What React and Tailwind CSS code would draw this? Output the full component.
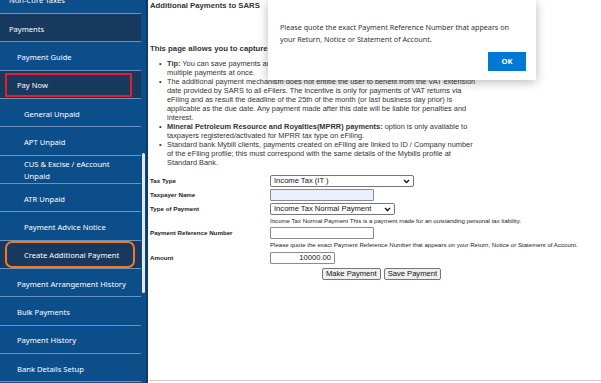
import React from "react";

const MENU = [
  { label: "Non-Core Taxes", indent: "pl-[9px]" },
  { label: "Payments", indent: "pl-[9px]", dark: true },
  { label: "Payment Guide", indent: "pl-[17px]" },
  { label: "Pay Now", indent: "pl-[17px]", dark: true, mark: "red" },
  { label: "General Unpaid", indent: "pl-[24px]" },
  { label: "APT Unpaid", indent: "pl-[24px]" },
  { label: "CUS & Excise / eAccount", label2: "Unpaid", indent: "pl-[24px]" },
  { label: "ATR Unpaid", indent: "pl-[24px]" },
  { label: "Payment Advice Notice", indent: "pl-[24px]" },
  { label: "Create Additional Payment", indent: "pl-[24px]", dark: true, mark: "orange" },
  { label: "Payment Arrangement History", indent: "pl-[17px]" },
  { label: "Bulk Payments", indent: "pl-[17px]" },
  { label: "Payment History", indent: "pl-[17px]" },
  { label: "Bank Details Setup", indent: "pl-[17px]" },
];

function Chevron() {
  return (
    <svg width="7" height="5" viewBox="0 0 7 5" className="shrink-0">
      <path d="M1 1 L3.5 3.5 L6 1" fill="none" stroke="#111" strokeWidth="1.3" />
    </svg>
  );
}

function Sidebar() {
  return (
    <div className="flex w-[141px] shrink-0 flex-col bg-[#0c4e8a] font-['Noto_Sans',sans-serif] text-[7.6px] text-white">
      <div className="-mt-[14.3px] flex flex-col">
        {MENU.map((m) => (
          <div
            key={m.label}
            className={`relative flex h-[28.33px] shrink-0 items-center border-b border-[#6b93bd] pt-[2px] ${m.indent} ${m.dark ? "bg-[#17385f]" : ""}`}
          >
            {m.mark === "red" && (
              <div className="absolute left-[5px] right-[9px] top-[2px] bottom-[1px] border-2 border-[#e3202a]" />
            )}
            {m.mark === "orange" && (
              <div className="absolute left-[5px] right-[6px] top-[0px] bottom-[0px] rounded-[7px] border-2 border-[#f27a22]" />
            )}
            <span className="relative whitespace-nowrap leading-[12px]">
              {m.label}
              {m.label2 && (
                <>
                  <br />
                  {m.label2}
                </>
              )}
            </span>
          </div>
        ))}
      </div>
    </div>
  );
}

function Field({ label, children, className = "" }) {
  return (
    <div className={`flex h-[12px] items-center ${className}`}>
      <div className="w-[120px] shrink-0 text-[6.2px] font-bold text-[#222]">{label}</div>
      {children}
    </div>
  );
}

export default function App() {
  return (
    <div className="flex h-[383px] w-[601px] overflow-hidden bg-white">
      <Sidebar />
      <div className="relative w-[5px] shrink-0 bg-[#0c4e8a]">
        <div className="absolute left-[1px] top-[153px] h-[140px] w-[3px] rounded-full bg-[#e6e6e6]" />
      </div>
      <div className="w-[2px] shrink-0 bg-[#0a3b6b]" />
      <main className="relative flex flex-1 flex-col pl-[2px] font-['Liberation_Sans',Arial,sans-serif] text-[#333]">
        <h1 className="mt-[1px] text-[7.75px] font-bold leading-[10px]">Additional Payments to SARS</h1>
        <p className="mt-[33px] text-[7.75px] font-bold leading-[10px]">
          This page allows you to capture additional payments to SARS.
        </p>
        <ul className="mt-[5px] pl-[17px] text-[7.4px] leading-[9px]">
          <li className="relative">
            <span className="absolute -left-[8px]">•</span>
            <b>Tip:</b> You can save payments and then use the Bulk Payments option to make
            <br />
            multiple payments at once.
          </li>
          <li className="relative">
            <span className="absolute -left-[8px]">•</span>
            The additional payment mechanism does not entitle the user to benefit from the VAT extension
            <br />
            date provided by SARS to all eFilers. The incentive is only for payments of VAT returns via
            <br />
            eFiling and as result the deadline of the 25th of the month (or last business day prior) is
            <br />
            applicable as the due date. Any payment made after this date will be liable for penalties and
            <br />
            interest.
          </li>
          <li className="relative">
            <span className="absolute -left-[8px]">•</span>
            <b>Mineral Petroleum Resource and Royalties(MPRR) payments:</b> option is only available to
            <br />
            taxpayers registered/activated for MPRR tax type on eFiling.
          </li>
          <li className="relative">
            <span className="absolute -left-[8px]">•</span>
            Standard bank Mybill clients, payments created on eFiling are linked to ID / Company number
            <br />
            of the eFiling profile; this must correspond with the same details of the Mybills profile at
            <br />
            Standard Bank.
          </li>
        </ul>

        <div className="mt-[8px] flex flex-col">
          <Field label="Tax Type">
            <div className="flex h-[12px] w-[144px] items-center justify-between rounded-[2px] border border-[#767676] px-[3px] text-[7.6px] text-[#111]">
              <span>Income Tax (IT )</span>
              <Chevron />
            </div>
          </Field>
          <Field label="Taxpayer Name" className="mt-[2px]">
            <div className="h-[12px] w-[104px] rounded-[1px] border border-[#8a8a8a] bg-[#e8f0fe]" />
          </Field>
          <Field label="Type of Payment" className="mt-[2px]">
            <div className="flex h-[12px] w-[125px] items-center justify-between rounded-[2px] border border-[#767676] px-[3px] text-[7.6px] text-[#111]">
              <span>Income Tax Normal Payment</span>
              <Chevron />
            </div>
          </Field>
          <div className="h-[11px] pl-[120px] pt-[1px] text-[6.1px] leading-[10px] text-[#222]">
            Income Tax Normal Payment This is a payment made for an outstanding personal tax liability.
          </div>
          <Field label="Payment Reference Number" className="mt-[1px]">
            <div className="h-[12px] w-[104px] rounded-[1px] border border-[#8a8a8a]" />
          </Field>
          <div className="h-[11px] pl-[120px] pt-[1px] text-[6.1px] leading-[10px] text-[#222]">
            Please quote the exact Payment Reference Number that appears on your Return, Notice or Statement of Account.
          </div>
          <Field label="Amount" className="mt-[2px]">
            <div className="flex h-[12px] w-[65px] items-center justify-end rounded-[1px] border border-[#8a8a8a] px-[3px] text-[7.6px] text-[#111]">
              10000.00
            </div>
          </Field>
          <div className="mt-[4px] flex gap-[3px] pl-[172px]">
            <button className="h-[12px] rounded-[2px] border border-[#767676] bg-[#efefef] px-[3px] text-[7.6px] leading-[10px] text-[#111]">
              Make Payment
            </button>
            <button className="h-[12px] rounded-[2px] border border-[#767676] bg-[#efefef] px-[3px] text-[7.6px] leading-[10px] text-[#111]">
              Save Payment
            </button>
          </div>
        </div>

        <div className="mt-auto mb-[2px] h-[1px] bg-[#c8c8c8]" />

        <div className="absolute left-[120px] top-0 flex h-[80px] w-[268px] flex-col bg-white px-[12px] pt-[21px] shadow-[0_2px_10px_rgba(0,0,0,0.28)] font-['Noto_Sans',sans-serif]">
          <p className="text-[7.2px] leading-[12px] text-[#333]">
            Please quote the exact Payment Reference Number that appears on
            <br />
            your Return, Notice or Statement of Account.
          </p>
          <div className="mt-auto mb-[9px] flex justify-end">
            <button className="mr-[-2px] h-[19px] w-[38px] bg-[#0078d4] text-[7.6px] font-bold text-white">OK</button>
          </div>
        </div>
      </main>
    </div>
  );
}
